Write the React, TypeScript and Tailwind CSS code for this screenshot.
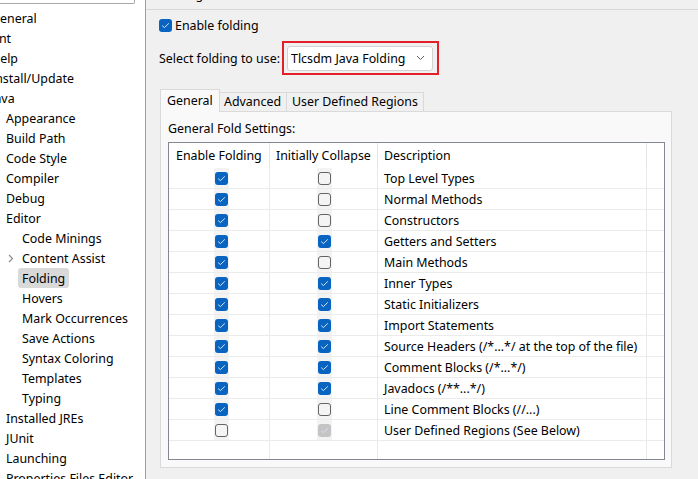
import React from "react";

type Mark = "on" | "off" | "dis";

const rows: [string, Mark, Mark][] = [
  ["Top Level Types", "on", "off"],
  ["Normal Methods", "on", "off"],
  ["Constructors", "on", "off"],
  ["Getters and Setters", "on", "on"],
  ["Main Methods", "on", "off"],
  ["Inner Types", "on", "on"],
  ["Static Initializers", "on", "on"],
  ["Import Statements", "on", "on"],
  ["Source Headers (/*...*/ at the top of the file)", "on", "on"],
  ["Comment Blocks (/*...*/)", "on", "on"],
  ["Javadocs (/**...*/)", "on", "on"],
  ["Line Comment Blocks (//...)", "on", "off"],
  ["User Defined Regions (See Below)", "off", "dis"],
];

const tree: [string, number][] = [
  ["General", 0],
  ["Ant", 0],
  ["Help", 0],
  ["Install/Update", 0],
  ["Java", 0],
  ["Appearance", 1],
  ["Build Path", 1],
  ["Code Style", 1],
  ["Compiler", 1],
  ["Debug", 1],
  ["Editor", 1],
  ["Code Minings", 2],
  ["Content Assist", 2],
  ["Folding", 2],
  ["Hovers", 2],
  ["Mark Occurrences", 2],
  ["Save Actions", 2],
  ["Syntax Coloring", 2],
  ["Templates", 2],
  ["Typing", 2],
  ["Installed JREs", 1],
  ["JUnit", 1],
  ["Launching", 1],
  ["Properties Files Editor", 1],
];

function Check({ mark }: { mark: Mark }) {
  if (mark === "off") {
    return <span className="block h-[13px] w-[13px] rounded-[3px] border border-[#646464] bg-[#f4f4f4]" />;
  }
  return (
    <span
      className={
        mark === "on"
          ? "flex h-[13px] w-[13px] items-center justify-center rounded-[3px] bg-[#0863c1]"
          : "flex h-[13px] w-[13px] items-center justify-center rounded-[3px] bg-[#c4c4c4]"
      }
    >
      <svg width="9" height="7" viewBox="0 0 9 7">
        <path d="M1.2 3.6 L3.4 5.6 L7.8 1.4" stroke="#d6e4f5" strokeWidth="1" fill="none" />
      </svg>
    </span>
  );
}

function Sidebar() {
  return (
    <aside className="w-[146px] shrink-0 overflow-hidden border-r border-[#a0a0a0] bg-white">
      <div className="h-[4px] w-[135px] rounded-br-[2px] border-b border-r border-[#a8a8a8]" />
      <div className="mt-[4px]">
        {tree.map(([label, level]) => (
          <div
            key={label}
            className={
              level === 0
                ? "flex h-[20px] items-center whitespace-nowrap -ml-[9px]"
                : level === 1
                  ? "flex h-[20px] items-center whitespace-nowrap pl-[6px]"
                  : "relative flex h-[20px] items-center whitespace-nowrap pl-[18px]"
            }
          >
            {label === "Content Assist" && (
              <svg className="absolute left-[8px] top-[6px]" width="6" height="9" viewBox="0 0 6 9">
                <path d="M1 1 L4.5 4.5 L1 8" stroke="#8a8a8a" strokeWidth="1.1" fill="none" />
              </svg>
            )}
            <span
              className={
                label === "Folding"
                  ? "flex h-[20px] items-center rounded-[3px] bg-[#d9d9d9] px-[4px] pt-[2px]"
                  : level === 2
                    ? "flex h-[20px] items-center px-[4px] pt-[2px]"
                    : "flex h-[20px] items-center pt-[2px]"
              }
            >
              {label}
            </span>
          </div>
        ))}
      </div>
    </aside>
  );
}

function FoldTable() {
  return (
    <div className="ml-[7px] mt-[5px] flex h-[318px] w-[497px] flex-col border border-[#828790] bg-white">
      <div className="flex h-[25px] shrink-0">
        <div className="flex w-[101px] items-center whitespace-nowrap border-r border-[#e5e5e5] pl-[7px] pt-[2px]">Enable Folding</div>
        <div className="flex w-[108px] items-center whitespace-nowrap border-r border-[#e5e5e5] pl-[6px] pt-[2px]">Initially Collapse</div>
        <div className="flex w-[269px] items-center border-r border-[#e5e5e5] pl-[6px] pt-[2px]">Description</div>
        <div className="flex-1" />
      </div>
      {rows.map(([text, a, b]) => (
        <div key={text} className="flex h-[21px] shrink-0 border-b border-[#ebebeb]">
          <div className="flex w-[101px] border-r border-[#e6e9ee] pl-[45px]">
            <span className="flex h-full w-[15px] items-center justify-center bg-[#f3f3f3]">
              <Check mark={a} />
            </span>
          </div>
          <div className="flex w-[108px] border-r border-[#e6e9ee] pl-[47px]">
            <span className="flex h-full w-[15px] items-center justify-center bg-[#f3f3f3]">
              <Check mark={b} />
            </span>
          </div>
          <div className="flex w-[269px] items-center whitespace-nowrap border-r border-[#e6e9ee] pl-[6px] pt-[2px]">{text}</div>
          <div className="flex-1" />
        </div>
      ))}
      <div className="flex flex-1">
        <div className="w-[101px] border-r border-[#e6e9ee]" />
        <div className="w-[108px] border-r border-[#e6e9ee]" />
        <div className="w-[269px] border-r border-[#e6e9ee]" />
        <div className="flex-1" />
      </div>
    </div>
  );
}

export default function App() {
  return (
    <div className="flex h-[479px] w-[698px] overflow-hidden bg-[#f0f0f0] font-['Noto_Sans',sans-serif] text-[12.4px] text-black">
      <Sidebar />
      <main className="flex flex-1 flex-col">
        <div className="h-[10px] shrink-0 overflow-hidden border-b border-[#d8d8d8] pl-[14px]">
          <div className="-mt-[13px] leading-[16px]">Folding</div>
        </div>

        <div className="ml-[13px] mt-[8px] flex h-[14px] items-center gap-[3px]">
          <Check mark="on" />
          <span className="pt-[2px]">Enable folding</span>
        </div>

        <div className="ml-[13px] mt-[9px] flex items-center">
          <span className="w-[123px] whitespace-nowrap pt-[2px]">Select folding to use:</span>
          <div className="flex h-[34px] w-[157px] items-center border-2 border-[#e3202a] pl-[3px]">
            <div className="flex h-[25px] w-[146px] items-center justify-between rounded-[3px] border border-[#d2d2d2] bg-white pl-[3px] pr-[7px]">
              <span className="whitespace-nowrap pt-[2px]">Tlcsdm Java Folding</span>
              <svg width="9" height="6" viewBox="0 0 9 6">
                <path d="M1 1 L4.5 4.5 L8 1" stroke="#606060" strokeWidth="1" fill="none" />
              </svg>
            </div>
          </div>
        </div>

        <div className="ml-[14px] mt-[14px] flex items-end">
          <div className="relative z-10 flex h-[23px] w-[60px] items-center border border-b-0 border-[#d9d9d9] bg-[#f9f9f9] pl-[6px]">
            General
          </div>
          <div className="flex h-[20px] w-[67px] items-center border border-l-0 border-[#d9d9d9] pl-[4px]">Advanced</div>
          <div className="flex h-[20px] w-[137px] items-center whitespace-nowrap border border-l-0 border-[#d9d9d9] pl-[5px]">
            User Defined Regions
          </div>
        </div>

        <div className="-mt-px ml-[14px] flex h-[357px] w-[512px] flex-col border border-[#dadada] bg-[#f9f9f9]">
          <div className="ml-[7px] mt-[9px] leading-[16px]">General Fold Settings:</div>
          <FoldTable />
        </div>
      </main>
    </div>
  );
}
